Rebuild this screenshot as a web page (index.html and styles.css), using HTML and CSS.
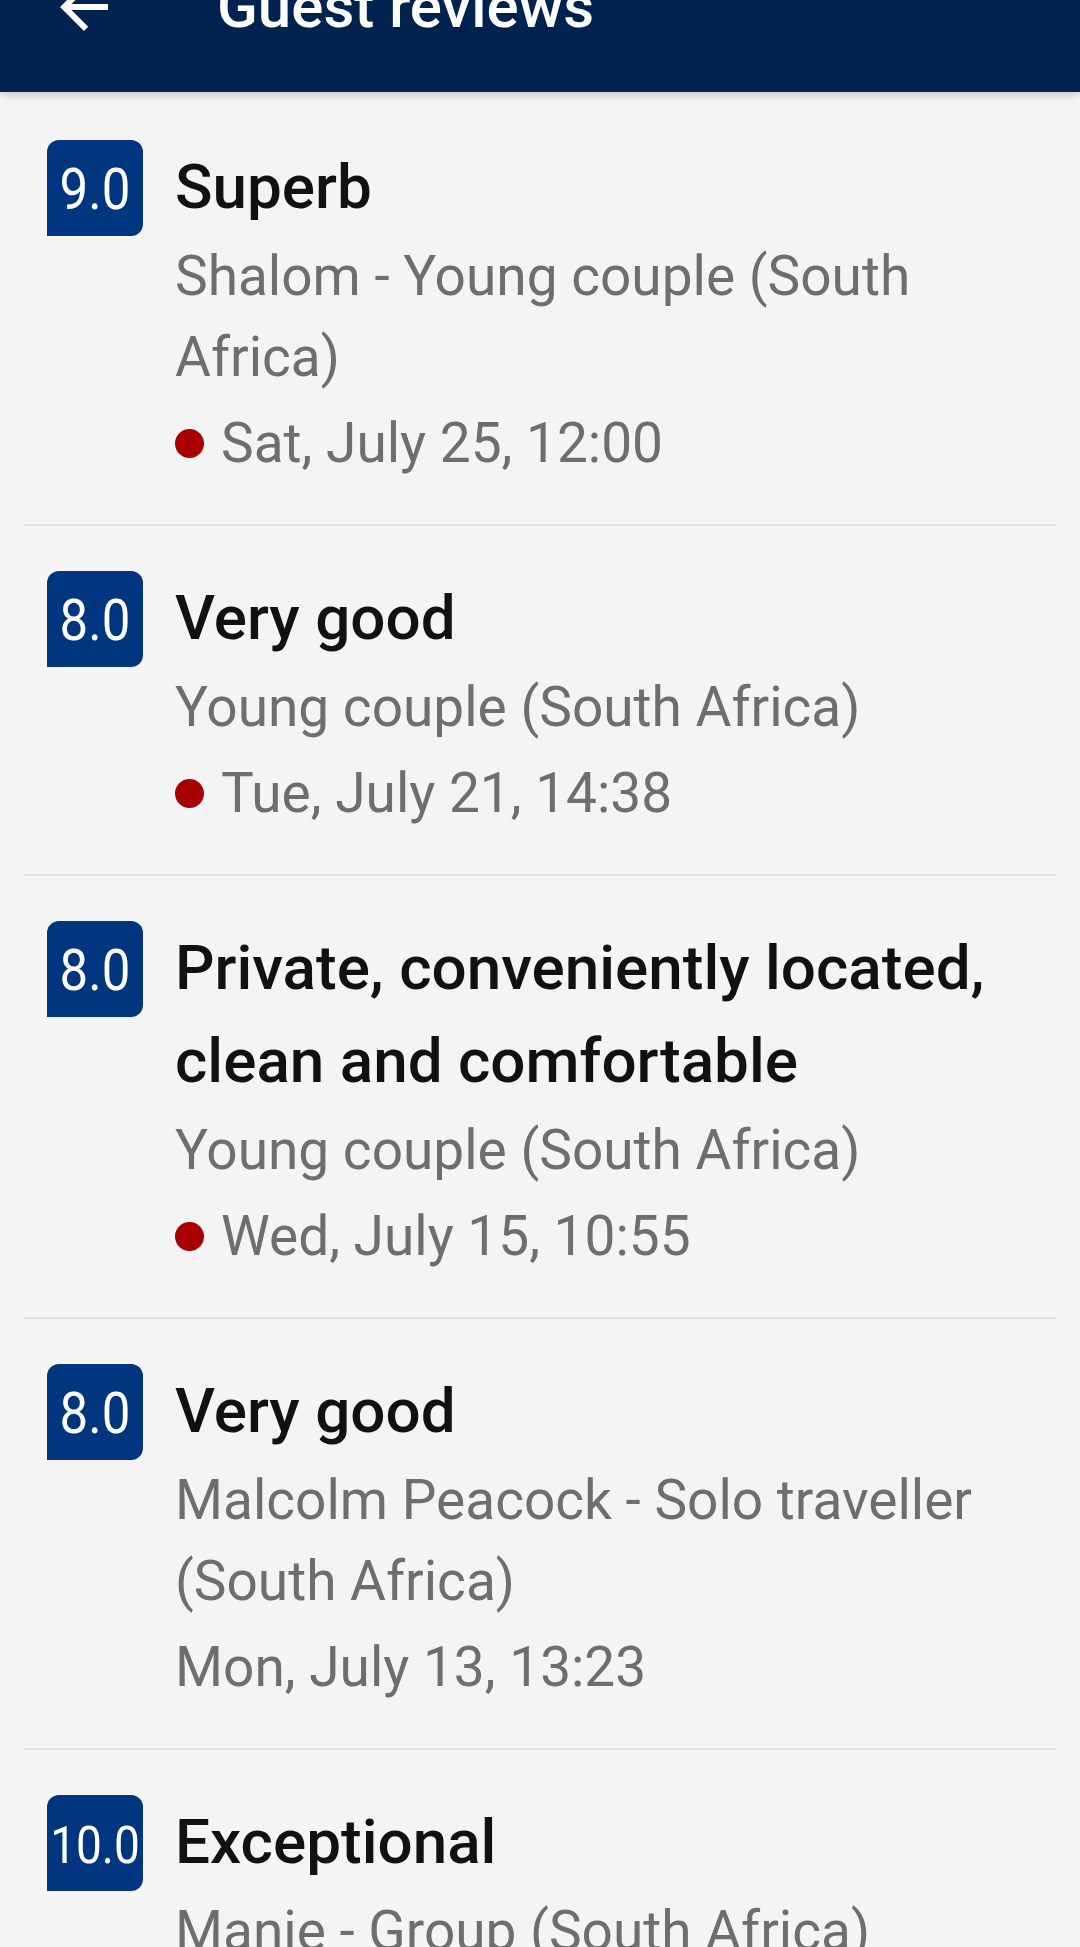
FILE: index.html
```html
<!DOCTYPE html>
<html lang="en">
<head>
    <meta charset="UTF-8">
    <meta name="viewport" content="width=device-width, initial-scale=1.0">
    <title>Guest reviews</title>
    <link rel="stylesheet" href="styles.css">
</head>
<body>
    <header class="toolbar">
        <div class="toolbar-inner">
            <svg class="back" viewBox="0 0 24 24" width="72" height="72">
                <path fill="#fff" d="M20 11H7.83l5.59-5.59L12 4l-8 8 8 8 1.41-1.41L7.83 13H20v-2z"/>
            </svg>
            <h1>Guest reviews</h1>
        </div>
    </header>

    <main class="reviews">
        <article class="review">
            <div class="score"><span>9.0</span></div>
            <div class="body">
                <h2 class="title">Superb</h2>
                <p class="author">Shalom - Young couple (South Africa)</p>
                <p class="date"><span class="dot"></span>Sat, July 25, 12:00</p>
            </div>
        </article>

        <article class="review">
            <div class="score"><span>8.0</span></div>
            <div class="body">
                <h2 class="title">Very good</h2>
                <p class="author">Young couple (South Africa)</p>
                <p class="date"><span class="dot"></span>Tue, July 21, 14:38</p>
            </div>
        </article>

        <article class="review">
            <div class="score"><span>8.0</span></div>
            <div class="body">
                <h2 class="title">Private, conveniently located, clean and comfortable</h2>
                <p class="author">Young couple (South Africa)</p>
                <p class="date"><span class="dot"></span>Wed, July 15, 10:55</p>
            </div>
        </article>

        <article class="review">
            <div class="score"><span>8.0</span></div>
            <div class="body">
                <h2 class="title">Very good</h2>
                <p class="author">Malcolm Peacock - Solo traveller (South Africa)</p>
                <p class="date">Mon, July 13, 13:23</p>
            </div>
        </article>

        <article class="review">
            <div class="score small"><span>10.0</span></div>
            <div class="body">
                <h2 class="title">Exceptional</h2>
                <p class="author">Manie - Group (South Africa)</p>
                <p class="date">Sat, July 11, 09:12</p>
            </div>
        </article>
    </main>
</body>
</html>
```

FILE: styles.css
```css
body {
    margin: 0;
    padding: 0;
    background-color: #f4f4f4;
    font-family: Roboto, "Noto Sans", Arial, sans-serif;
    overflow: hidden;
}

/* top bar, cropped at the top of the screenshot */
.toolbar {
    height: 92px;
    overflow: hidden;
    background-color: #00224f;
    box-shadow: 0 3px 8px rgba(0, 0, 0, 0.18);
    position: relative;
    z-index: 1;
}
.toolbar-inner {
    height: 168px;
    margin-top: -77px;
    display: flex;
    align-items: center;
    padding-left: 48px;
}
.back {
    flex: none;
}
.toolbar h1 {
    margin: 0 0 0 97px;
    color: #fff;
    font-size: 60px;
    font-weight: 500;
    line-height: 1;
}

.reviews {
    padding-top: 3px;
}
.review {
    display: flex;
    gap: 32px;
    margin: 0 24px;
    padding: 45px 24px 40px 23px;
    border-bottom: 2px solid #e2e2e2;
}
.score {
    flex: none;
    width: 96px;
    height: 96px;
    display: flex;
    align-items: center;
    justify-content: center;
    padding-top: 3px;
    box-sizing: border-box;
    background-color: #003580;
    border-radius: 12px 12px 12px 0;
    color: #fff;
    font-size: 51px;
    line-height: 1;
}
.score span {
    display: inline-block;
    transform: scaleY(1.14);
}
.score.small {
    font-size: 46px;
}
.body {
    flex: 1;
    min-width: 0;
}
.title {
    margin: 0;
    color: #111;
    font-size: 62px;
    font-weight: 500;
    line-height: 93px;
}
.author {
    margin: 3px 0 0 0;
    color: #6e6e6e;
    font-size: 55px;
    line-height: 81px;
}
.date {
    margin: 5px 0 0 0;
    display: flex;
    align-items: center;
    color: #6e6e6e;
    font-size: 55px;
    line-height: 81px;
}
.dot {
    width: 29px;
    height: 29px;
    margin-right: 17px;
    border-radius: 50%;
    background-color: #a80000;
}
```
